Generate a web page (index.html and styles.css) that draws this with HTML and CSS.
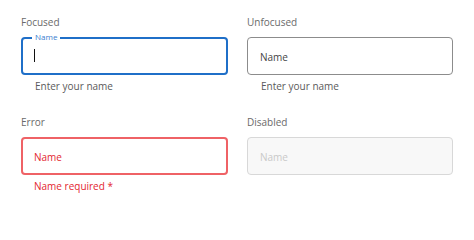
FILE: index.html
```html
<!DOCTYPE html>
<html lang="en">
<head>
<meta charset="utf-8">
<title>Text fields</title>
<link rel="stylesheet" href="styles.css">
</head>
<body>
<main class="grid">
  <section class="field">
    <div class="caption">Focused</div>
    <div class="box box-focused">
      <span class="float-label">Name</span>
      <span class="cursor"></span>
    </div>
    <div class="helper">Enter your name</div>
  </section>
  <section class="field">
    <div class="caption">Unfocused</div>
    <div class="box box-normal"><span class="value">Name</span></div>
    <div class="helper">Enter your name</div>
  </section>
  <section class="field">
    <div class="caption">Error</div>
    <div class="box box-error"><span class="value">Name</span></div>
    <div class="helper helper-error">Name required *</div>
  </section>
  <section class="field">
    <div class="caption">Disabled</div>
    <div class="box box-disabled"><span class="value">Name</span></div>
  </section>
</main>
</body>
</html>
```
FILE: styles.css
```css
html, body {
  margin: 0;
  padding: 0;
  background: #ffffff;
}
body {
  font-family: "Open Sans", "Noto Sans", sans-serif;
  font-size: 10px;
  line-height: 14px;
}
.grid {
  display: grid;
  grid-template-columns: 207px 206px;
  column-gap: 19px;
  row-gap: 22px;
  padding: 15px 0 0 21px;
}
.field {
  display: flex;
  flex-direction: column;
}
.caption {
  color: #6a6a6a;
  height: 14px;
  margin-bottom: 8px;
}
.box {
  position: relative;
  box-sizing: border-box;
  height: 38px;
  border-radius: 4px;
  display: flex;
  align-items: center;
  padding: 2px 0 0 12px;
  background: #ffffff;
}
.value {
  color: #454545;
}
.box-focused {
  border: 2px solid #1f6fc8;
  padding-left: 11px;
}
.box-normal {
  border: 1px solid #8c8c8c;
}
.box-error {
  border: 2px solid #ef6266;
  padding-left: 11px;
}
.box-error .value {
  color: #e3262f;
}
.box-disabled {
  border: 1px solid #d8d8d8;
  background: #f8f8f8;
}
.box-disabled .value {
  color: #c9c9c9;
}
.float-label {
  position: absolute;
  top: -7px;
  left: 9px;
  padding: 0 3px;
  background: #ffffff;
  color: #3a7dcf;
  font-size: 8px;
  line-height: 10px;
}
.cursor {
  display: block;
  width: 1px;
  height: 13px;
  margin-top: -3px;
  background: #111111;
}
.helper {
  margin-top: 4px;
  padding-left: 14px;
  color: #5a5a5a;
}
.helper-error {
  padding-left: 13px;
  color: #e3262f;
}
```
